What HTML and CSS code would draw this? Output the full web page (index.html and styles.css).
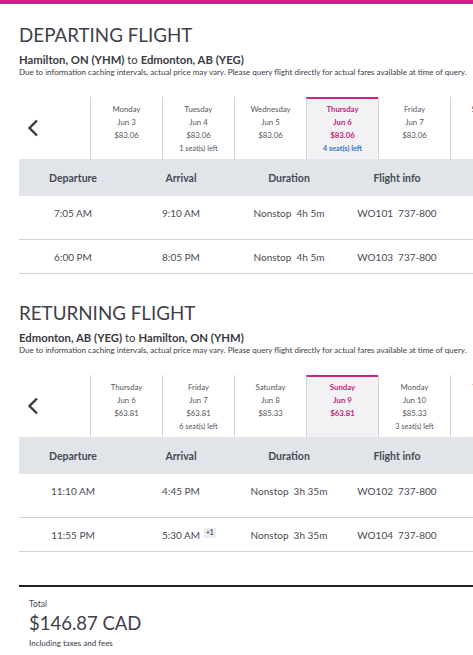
FILE: index.html
```html
<!DOCTYPE html>
<html lang="en">
  <head>
    <meta charset="UTF-8" />
    <meta name="viewport" content="width=device-width, initial-scale=1.0" />
    <title>Flight summary</title>
    <link rel="stylesheet" href="styles.css">
  </head>
  <body>
    <div class="top-bar"></div>
    <div class="page">
      <!-- departing -->
      <section class="flight-section">
        <h1 class="section-title">DEPARTING FLIGHT</h1>
        <p class="route"><b>Hamilton, ON (YHM)</b> to <b>Edmonton, AB (YEG)</b></p>
        <p class="disclaimer">Due to information caching intervals, actual price may vary. Please query flight directly for actual fares available at time of query.</p>

        <div class="date-strip">
          <div class="arrow-cell">
            <svg width="12" height="18" viewBox="0 0 12 18"><path d="M10 1.5 L2.5 9 L10 16.5" fill="none" stroke="#3b3b46" stroke-width="2.4"/></svg>
          </div>
          <div class="day-cell"><span>Monday</span><span>Jun 3</span><span>$83.06</span></div>
          <div class="day-cell"><span>Tuesday</span><span>Jun 4</span><span>$83.06</span><span class="seats">1 seat(s) left</span></div>
          <div class="day-cell"><span>Wednesday</span><span>Jun 5</span><span>$83.06</span></div>
          <div class="day-cell selected"><span>Thursday</span><span>Jun 6</span><span>$83.06</span><span class="seats">4 seat(s) left</span></div>
          <div class="day-cell"><span>Friday</span><span>Jun 7</span><span>$83.06</span></div>
          <div class="day-cell"><span>Saturday</span><span>Jun 8</span><span>$85.33</span></div>
        </div>

        <div class="flight-table">
          <div class="table-head">
            <div>Departure</div><div>Arrival</div><div>Duration</div><div>Flight info</div>
          </div>
          <div class="flight-row">
            <div>7:05 AM</div><div>9:10 AM</div><div>Nonstop&nbsp; 4h 5m</div><div>WO101&nbsp; 737-800</div>
          </div>
          <div class="flight-row">
            <div>6:00 PM</div><div>8:05 PM</div><div>Nonstop&nbsp; 4h 5m</div><div>WO103&nbsp; 737-800</div>
          </div>
        </div>
      </section>

      <!-- returning -->
      <section class="flight-section">
        <h1 class="section-title">RETURNING FLIGHT</h1>
        <p class="route"><b>Edmonton, AB (YEG)</b> to <b>Hamilton, ON (YHM)</b></p>
        <p class="disclaimer">Due to information caching intervals, actual price may vary. Please query flight directly for actual fares available at time of query.</p>

        <div class="date-strip">
          <div class="arrow-cell">
            <svg width="12" height="18" viewBox="0 0 12 18"><path d="M10 1.5 L2.5 9 L10 16.5" fill="none" stroke="#3b3b46" stroke-width="2.4"/></svg>
          </div>
          <div class="day-cell"><span>Thursday</span><span>Jun 6</span><span>$63.81</span></div>
          <div class="day-cell"><span>Friday</span><span>Jun 7</span><span>$63.81</span><span class="seats">6 seat(s) left</span></div>
          <div class="day-cell"><span>Saturday</span><span>Jun 8</span><span>$85.33</span></div>
          <div class="day-cell selected"><span>Sunday</span><span>Jun 9</span><span>$63.81</span></div>
          <div class="day-cell"><span>Monday</span><span>Jun 10</span><span>$85.33</span><span class="seats">3 seat(s) left</span></div>
          <div class="day-cell"><span>Tuesday</span><span>Jun 11</span><span>$85.33</span></div>
        </div>

        <div class="flight-table">
          <div class="table-head">
            <div>Departure</div><div>Arrival</div><div>Duration</div><div>Flight info</div>
          </div>
          <div class="flight-row">
            <div>11:10 AM</div><div>4:45 PM</div><div>Nonstop&nbsp; 3h 35m</div><div>WO102&nbsp; 737-800</div>
          </div>
          <div class="flight-row">
            <div>11:55 PM</div><div><span class="arrive">5:30 AM<sup class="plus-day">+1</sup></span></div><div>Nonstop&nbsp; 3h 35m</div><div>WO104&nbsp; 737-800</div>
          </div>
        </div>
      </section>

      <div class="total">
        <div class="total-label">Total</div>
        <div class="total-amount">$146.87 CAD</div>
        <div class="total-note">Including taxes and fees</div>
      </div>
    </div>
  </body>
</html>
```

FILE: styles.css
```css
body {
  font-family: Lato, "Open Sans", sans-serif;
  color: #45454f;
  margin: 0;
  overflow: hidden;
  background: #fff;
}

.top-bar {
  height: 4px;
  background: #d81b8c;
}

.page {
  width: 540px;
  padding-left: 19px;
}

.flight-section + .flight-section {
  margin-top: 27px;
}

.section-title {
  font-size: 18.8px;
  font-weight: 400;
  line-height: 24px;
  margin: 19px 0 0;
  color: #3f3f4a;
}

.flight-section + .flight-section .section-title {
  margin-top: 0;
}

.route {
  font-size: 11.3px;
  line-height: 13px;
  margin: 6px 0 0;
  color: #3a3a44;
}

.route b {
  font-weight: 700;
}

.disclaimer {
  font-size: 8px;
  line-height: 11px;
  margin: 1px 0 0;
  color: #3a3a44;
}

/* 日期选择 */
.date-strip {
  display: flex;
  height: 62px;
  margin-top: 19px;
}

.arrow-cell {
  width: 71px;
  flex: none;
  display: flex;
  align-items: center;
  padding-left: 8px;
  box-sizing: border-box;
}

.day-cell {
  width: 72px;
  flex: none;
  border-left: 1px solid #d4d4d8;
  box-sizing: border-box;
  display: flex;
  flex-direction: column;
  align-items: center;
  padding-top: 6px;
  font-size: 7.8px;
  line-height: 13px;
  color: #55555c;
}

.day-cell .seats {
  font-size: 7.3px;
}

.day-cell.selected {
  background: #f2f2f5;
  border-top: 2px solid #cf2484;
  padding-top: 4px;
  color: #c8237e;
  font-weight: 700;
}

.day-cell.selected .seats {
  color: #2c78c2;
}

/* 航班表格 */
.flight-table {
  width: 100%;
}

.table-head,
.flight-row {
  display: grid;
  grid-template-columns: 108px 108px 108px 108px 1fr;
  text-align: center;
}

.table-head {
  background: #e1e5ea;
  height: 37px;
  align-items: center;
  font-size: 10.5px;
  font-weight: 700;
  color: #454a55;
}

.flight-row {
  padding: 11px 0 10px;
  font-size: 10px;
  line-height: 12px;
  border-bottom: 1px solid #d2d2d6;
  color: #4a4a54;
}

.table-head + .flight-row {
  padding-bottom: 20px;
}

.arrive {
  position: relative;
}

.plus-day {
  position: absolute;
  left: 100%;
  top: -1px;
  margin-left: 4px;
  font-size: 6.5px;
  line-height: 10px;
  font-weight: 700;
  background: #e9edf2;
  padding: 0 2px;
}

/* 总价 */
.total {
  margin-top: 33px;
  border-top: 2px solid #1f1f24;
  padding: 11px 10px 0;
}

.total-label {
  font-size: 8.5px;
  line-height: 12px;
  color: #4a4a54;
}

.total-amount {
  font-size: 18.5px;
  line-height: 26px;
  color: #3f3f4a;
}

.total-note {
  font-size: 8px;
  line-height: 12px;
  margin-top: 1px;
  color: #3a3a44;
}
```
